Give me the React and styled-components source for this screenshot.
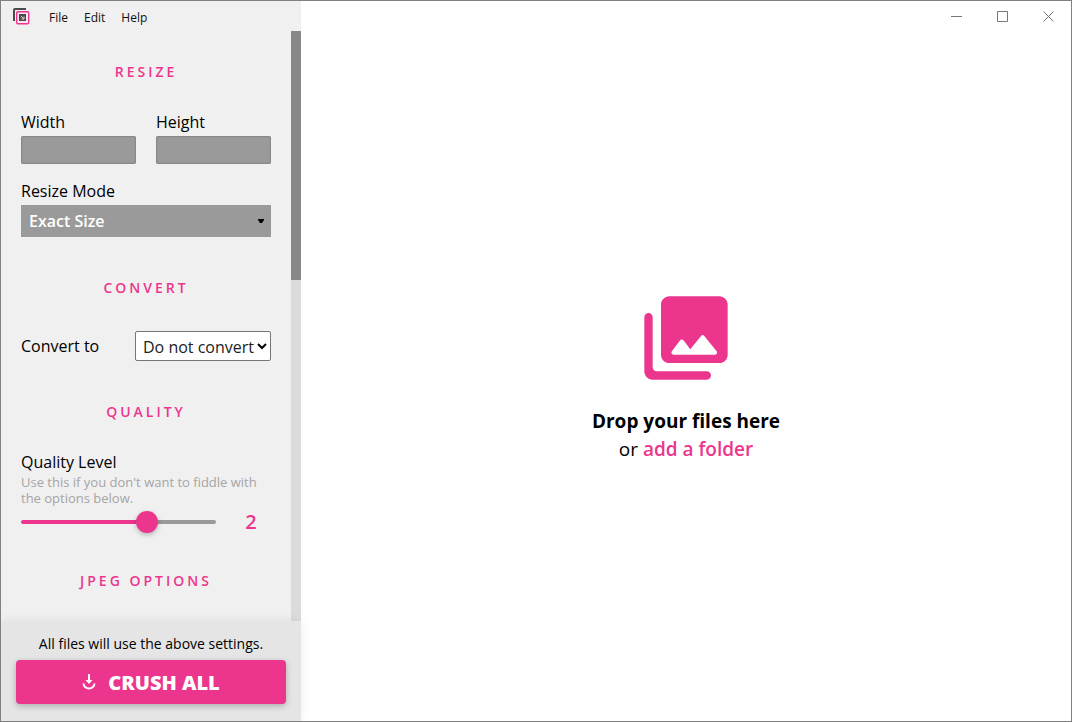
import React, { useState } from 'react'
import styled, { createGlobalStyle } from 'styled-components'

const PINK = '#ec368d'

const App = () => {
  const [level, setLevel] = useState(2)

  return (
    <Window>
      <GlobalStyle />
      <Sidebar>
        <MenuBar>
          <Logo />
          <MenuItem>File</MenuItem>
          <MenuItem>Edit</MenuItem>
          <MenuItem>Help</MenuItem>
        </MenuBar>
        <Scroller>
          <Settings>
            <Heading>RESIZE</Heading>
            <Columns>
              <Field>
                <Label htmlFor='width'>Width</Label>
                <TextInput id='width' type='text' />
              </Field>
              <Field>
                <Label htmlFor='height'>Height</Label>
                <TextInput id='height' type='text' />
              </Field>
            </Columns>
            <Field>
              <Label htmlFor='mode'>Resize Mode</Label>
              <ModeWrap>
                <ModeSelect id='mode'>
                  <option>Exact Size</option>
                </ModeSelect>
                <Arrow viewBox='0 0 8 6'>
                  <path d='M1 1h6v1L5 5H3L1 2z' />
                </Arrow>
              </ModeWrap>
            </Field>

            <Heading>CONVERT</Heading>
            <ConvertRow>
              <Label htmlFor='convert'>Convert to</Label>
              <ConvertWrap>
                <ConvertSelect id='convert'>
                  <option>Do not convert</option>
                </ConvertSelect>
                <Chevron viewBox='0 0 10 8'>
                  <path d='M1 2l4 4 4-4' />
                </Chevron>
              </ConvertWrap>
            </ConvertRow>

            <Heading>QUALITY</Heading>
            <Label htmlFor='quality'>Quality Level</Label>
            <Hint>Use this if you don't want to fiddle with the options below.</Hint>
            <SliderRow>
              <Slider
                id='quality'
                type='range'
                min='0'
                max='3'
                value={level}
                $fill={(level / 3) * 100}
                onChange={(e) => setLevel(Number(e.target.value))}
              />
              <Level htmlFor='quality'>{level}</Level>
            </SliderRow>

            <Heading>JPEG OPTIONS</Heading>
          </Settings>
          <ScrollTrack>
            <ScrollThumb />
          </ScrollTrack>
        </Scroller>
        <Footer>
          <Note>All files will use the above settings.</Note>
          <CrushButton>
            <CrushIcon />
            CRUSH ALL
          </CrushButton>
        </Footer>
      </Sidebar>
      <Main>
        <TitleBar>
          <WindowButton aria-label='Minimize'>
            <svg width='12' height='12' viewBox='0 0 12 12'><path d='M0 5.5h11' /></svg>
          </WindowButton>
          <WindowButton aria-label='Maximize'>
            <svg width='12' height='12' viewBox='0 0 12 12'><path d='M.5.5h10v10H.5z' /></svg>
          </WindowButton>
          <WindowButton aria-label='Close'>
            <svg width='12' height='12' viewBox='0 0 12 12'><path d='M.5.5l10 10M10.5.5l-10 10' /></svg>
          </WindowButton>
        </TitleBar>
        <DropZone>
          <Photos viewBox='0 0 24 24'>
            <path d='M22 16V4c0-1.1-.9-2-2-2H8c-1.1 0-2 .9-2 2v12c0 1.1.9 2 2 2h12c1.1 0 2-.9 2-2zm-10.6-3.47l1.63 2.18 2.58-3.22c.2-.25.58-.25.78 0l2.96 3.7c.26.33.03.81-.39.81H9c-.41 0-.65-.47-.4-.8l2-2.67c.2-.26.6-.26.8 0zM2 7v13c0 1.1.9 2 2 2h13c.55 0 1-.45 1-1s-.45-1-1-1H5c-.55 0-1-.45-1-1V7c0-.55-.45-1-1-1s-1 .45-1 1z' />
          </Photos>
          <DropTitle>Drop your files here</DropTitle>
          <DropText>or <a href='#folder'>add a folder</a></DropText>
        </DropZone>
      </Main>
    </Window>
  )
}
export default App

const Logo = () => (
  <LogoSvg viewBox='0 0 17 17'>
    <path d='M1 13V2a1 1 0 0 1 1-1h11' stroke='#4a4a4a' strokeWidth='2' fill='none' />
    <rect x='3.7' y='3.7' width='12' height='12' rx='1' stroke={PINK} strokeWidth='1.4' fill='#f8e8f0' />
    <path d='M6 6h7v7H6z' fill='#4a4a4a' />
    <path d='M8 8l2.5 2.5M11 8.5V11H8.5' stroke='#ddd' strokeWidth='1' fill='none' />
  </LogoSvg>
)

const CrushIcon = () => (
  <CrushSvg viewBox='0 0 14 16'>
    <path d='M7 0v8M1.5 9.5a5.5 5 0 0 0 11 0' />
    <path d='M3.5 6h7L7 10z' fill='#fff' stroke='none' />
  </CrushSvg>
)

const GlobalStyle = createGlobalStyle`
  * {
    box-sizing: border-box;
  }
  body {
    margin: 0;
    font-family: 'Open Sans', sans-serif;
    font-size: 16px;
    line-height: 20px;
    color: #000;
  }
  button, input, select {
    font-family: inherit;
  }
`
const Window = styled.div`
  display: flex;
  height: 100vh;
  border: 1px solid #808080;
  background: #fff;
  overflow: hidden;
`
const Sidebar = styled.aside`
  display: flex;
  flex-direction: column;
  flex: 0 0 300px;
  background: #f0f0f0;
`
const MenuBar = styled.nav`
  display: flex;
  align-items: center;
  height: 30px;
  padding-left: 12px;
`
const LogoSvg = styled.svg`
  width: 17px;
  height: 17px;
  margin-right: 11px;
`
const MenuItem = styled.button`
  border: 0;
  padding: 3px 8px 0;
  background: none;
  font: 12px/16px 'Open Sans', sans-serif;
  color: #111;
`
const Scroller = styled.div`
  display: flex;
  flex: 1;
  min-height: 0;
`
const Settings = styled.div`
  flex: 1;
  min-width: 0;
  padding: 0 20px;
  overflow: hidden;
`
const Heading = styled.h2`
  margin: 41px 0 30px;
  font-size: 14px;
  font-weight: 600;
  line-height: 20px;
  letter-spacing: 3px;
  text-align: center;
  color: ${PINK};

  &:first-child {
    margin-top: 31px;
  }
`
const Columns = styled.div`
  display: grid;
  grid-template-columns: 1fr 1fr;
  gap: 20px;
  margin-bottom: 17px;
`
const Field = styled.div`
  display: flex;
  flex-direction: column;
  gap: 4px;
  min-width: 0;
`
const Label = styled.label`
  line-height: 20px;
`
const TextInput = styled.input`
  width: 100%;
  height: 28px;
  border: 0;
  border-radius: 2px;
  padding: 0 8px;
  background: #9a9a9a;
  box-shadow: inset 0 0 2px rgba(0, 0, 0, 0.4);
  color: #fff;
`
const ModeWrap = styled.div`
  position: relative;
`
const ModeSelect = styled.select`
  display: block;
  appearance: none;
  width: 100%;
  height: 32px;
  border: 0;
  padding: 0 8px;
  border-radius: 0;
  background: #9a9a9a;
  color: #fff;
  font-size: 16px;
  font-weight: 600;
`
const Arrow = styled.svg`
  position: absolute;
  right: 6px;
  top: 13px;
  width: 8px;
  height: 6px;
  pointer-events: none;
`
const ConvertRow = styled.div`
  display: flex;
  align-items: center;
  justify-content: space-between;
  padding-top: 3px;
`
const ConvertWrap = styled.div`
  position: relative;
  width: 136px;
`
const ConvertSelect = styled.select`
  display: block;
  appearance: none;
  width: 100%;
  height: 30px;
  border: 1px solid #767676;
  border-radius: 2px;
  padding: 2px 0 0 7px;
  background: #fff;
  color: #222;
  font-size: 16px;
`
const Chevron = styled.svg`
  position: absolute;
  right: 4px;
  top: 11px;
  width: 10px;
  height: 8px;
  fill: none;
  stroke: #000;
  stroke-width: 2;
  pointer-events: none;
`
const Hint = styled.p`
  margin: 2px 0 8px;
  font-size: 13px;
  line-height: 16px;
  color: #a5a5a5;
`
const SliderRow = styled.div`
  display: flex;
  align-items: center;
  height: 16px;
`
const Slider = styled.input`
  appearance: none;
  flex: 1;
  min-width: 0;
  height: 4px;
  margin: 0;
  border-radius: 2px;
  background: linear-gradient(to right, ${PINK} ${(p) => p.$fill}%, #999 ${(p) => p.$fill}%);

  &::-webkit-slider-thumb {
    appearance: none;
    width: 22px;
    height: 22px;
    border-radius: 50%;
    background: ${PINK};
    box-shadow: 0 2px 5px rgba(0, 0, 0, 0.25);
  }
`
const Level = styled.label`
  width: 55px;
  padding-left: 15px;
  font-size: 20px;
  font-weight: 600;
  text-align: center;
  color: ${PINK};
`
const ScrollTrack = styled.div`
  width: 10px;
  background: #dbdbdb;
`
const ScrollThumb = styled.div`
  height: 249px;
  background: #888;
`
const Footer = styled.footer`
  padding: 13px 15px 17px;
  background: #e5e5e5;
  box-shadow: 0 0 10px rgba(0, 0, 0, 0.08);
`
const Note = styled.p`
  margin: 0 0 6px;
  font-size: 14px;
  line-height: 20px;
  text-align: center;
`
const CrushButton = styled.button`
  display: flex;
  align-items: center;
  justify-content: center;
  gap: 12px;
  width: 100%;
  height: 44px;
  border: 0;
  border-radius: 4px;
  background: ${PINK};
  box-shadow: 0 2px 6px rgba(0, 0, 0, 0.25);
  color: #fff;
  font-size: 20px;
  font-weight: 800;
`
const CrushSvg = styled.svg`
  width: 14px;
  height: 16px;
  fill: none;
  stroke: #fff;
  stroke-width: 2;
`
const Main = styled.main`
  display: flex;
  flex-direction: column;
  flex: 1;
`
const TitleBar = styled.header`
  display: flex;
  justify-content: flex-end;
  height: 32px;
  margin-right: -1px;
`
const WindowButton = styled.button`
  display: flex;
  align-items: center;
  justify-content: center;
  width: 46px;
  border: 0;
  padding: 0;
  background: none;

  svg {
    fill: none;
    stroke: #777;
  }
`
const DropZone = styled.section`
  display: flex;
  flex-direction: column;
  align-items: center;
  justify-content: center;
  flex: 1;
  padding-bottom: 4px;
  font-size: 19px;
  line-height: 28px;
`
const Photos = styled.svg`
  width: 100px;
  height: 100px;
  margin-bottom: 19px;
  fill: ${PINK};
`
const DropTitle = styled.h1`
  margin: 0;
  font-size: 19px;
  font-weight: 700;
`
const DropText = styled.p`
  margin: 0;

  a {
    color: ${PINK};
    font-weight: 600;
    text-decoration: none;
  }
`
